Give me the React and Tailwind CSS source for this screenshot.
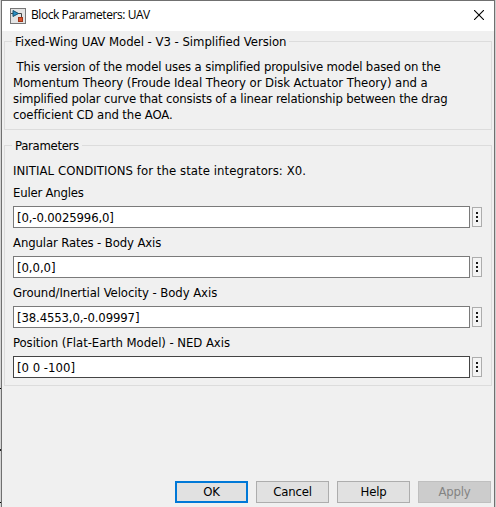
import React from "react";

const fields = [
  { label: "Euler Angles", value: "[0,-0.0025996,0]", ls: "tracking-[-0.2px]", vs: "tracking-[-0.13px]", border: "border-[#7a7a7a]" },
  { label: "Angular Rates - Body Axis", value: "[0,0,0]", ls: "tracking-[-0.12px]", vs: "tracking-[-0.07px]", border: "border-[#7a7a7a]" },
  { label: "Ground/Inertial Velocity - Body Axis", value: "[38.4553,0,-0.09997]", ls: "tracking-[-0.07px]", vs: "tracking-[-0.13px]", border: "border-[#7a7a7a]" },
  { label: "Position (Flat-Earth Model) - NED Axis", value: "[0 0 -100]", ls: "tracking-[-0.06px]", vs: "tracking-[0px]", border: "border-[#444444]" },
];

function Group({ title, tracking, className, children }) {
  return (
    <fieldset className={`mx-[2px] min-w-0 border border-[#dcdcdc] pl-[8px] ${className}`}>
      <legend className={`ml-[-1px] h-[15px] whitespace-pre px-[3px] leading-[16px] ${tracking}`}>{title}</legend>
      {children}
    </fieldset>
  );
}

function Field({ label, value, ls, vs, border }) {
  return (
    <div className="h-[50px]">
      <div className={`h-[22px] whitespace-pre pt-[1px] leading-[16px] ${ls}`}>{label}</div>
      <div className="flex items-center gap-[2px]">
        <div className={`h-[22px] w-[457px] whitespace-pre border bg-white pl-[3px] leading-[21px] ${border} ${vs}`}>{value}</div>
        <div className="flex h-[20px] w-[10px] flex-col items-center justify-center gap-[2px] border border-[#adadad] bg-[#f4f4f4]">
          <i className="h-[2px] w-[2px] bg-[#1a1a1a]" />
          <i className="h-[2px] w-[2px] bg-[#1a1a1a]" />
          <i className="h-[2px] w-[2px] bg-[#1a1a1a]" />
        </div>
      </div>
    </div>
  );
}

export default function App() {
  return (
    <div className="flex h-[507px] w-[496px] overflow-hidden bg-[#cfcfcf] font-['DejaVu_Sans_Condensed','DejaVu_Sans',sans-serif] text-[13px] text-black">
      <div className="flex w-px flex-col bg-[#d4d4d4] pt-[388px]">
        <i className="h-px w-[2px] shrink-0 bg-black" />
        <i className="mt-[60px] h-[2px] w-[2px] shrink-0 bg-[#222]" />
        <i className="mt-[51px] h-px w-[2px] shrink-0 bg-black" />
      </div>
      <div className="flex w-[494px] flex-col border-x border-t border-[#707070] bg-[#f0f0f0]">
        <div className="flex h-[30px] shrink-0 items-center bg-white pb-[2px] pl-[8px] font-['Open_Sans',sans-serif] text-[12px] tracking-[-0.43px]">
          <svg className="mt-px" width="16" height="16" viewBox="0 0 16 16">
            <rect x=".5" y=".5" width="15" height="15" fill="#e4e4e4" stroke="#777" />
            <path d="M1 5.5H3M8 5.5H11.5V9" fill="none" stroke="#444" />
            <path d="M3 2.5 8.5 5.5 3 8.5Z" fill="#2a8fc4" stroke="#17516e" />
            <rect x="8.5" y="9.5" width="4" height="4" fill="#d9532c" stroke="#9c3519" />
          </svg>
          <span className="ml-[5px]">Block Parameters: UAV</span>
          <svg className="ml-auto mr-[10px]" width="10" height="10" viewBox="0 0 10 10">
            <path d="M0 0 10 10M10 0 0 10" stroke="#000" strokeWidth="1.1" />
          </svg>
        </div>
        <Group title="Fixed-Wing UAV Model - V3 - Simplified Version" tracking="tracking-[-0.03px]" className="mt-[3px] h-[96px]">
          <div className="mt-[10px] whitespace-pre leading-[16px]">
            <div className="tracking-[-0.15px]"> This version of the model uses a simplified propulsive model based on the</div>
            <div className="tracking-[-0.065px]">Momentum Theory (Froude Ideal Theory or Disk Actuator Theory) and a</div>
            <div className="tracking-[-0.17px]">simplified polar curve that consists of a linear relationship between the drag</div>
            <div className="tracking-[-0.11px]">coefficient CD and the AOA.</div>
          </div>
        </Group>
        <Group title="Parameters" tracking="tracking-[-0.3px]" className="mt-[8px] h-[248px]">
          <div className="mt-[10px] h-[21px] whitespace-pre leading-[16px] tracking-[0.06px]">INITIAL CONDITIONS for the state integrators: X0.</div>
          {fields.map((f) => <Field key={f.label} {...f} />)}
        </Group>
        <div className="mb-[4px] mr-[3px] mt-auto flex justify-end gap-[8px] text-center leading-[20px] tracking-[-0.2px]">
          <div className="h-[22px] w-[73px] border-2 border-[#0078d7] bg-[#e1e1e1] leading-[18px]">OK</div>
          <div className="h-[22px] w-[73px] border border-[#adadad] bg-[#e1e1e1]">Cancel</div>
          <div className="h-[22px] w-[73px] border border-[#adadad] bg-[#e1e1e1]">Help</div>
          <div className="h-[22px] w-[73px] border border-[#bfbfbf] bg-[#cccccc] text-[#838383]">Apply</div>
        </div>
      </div>
    </div>
  );
}
